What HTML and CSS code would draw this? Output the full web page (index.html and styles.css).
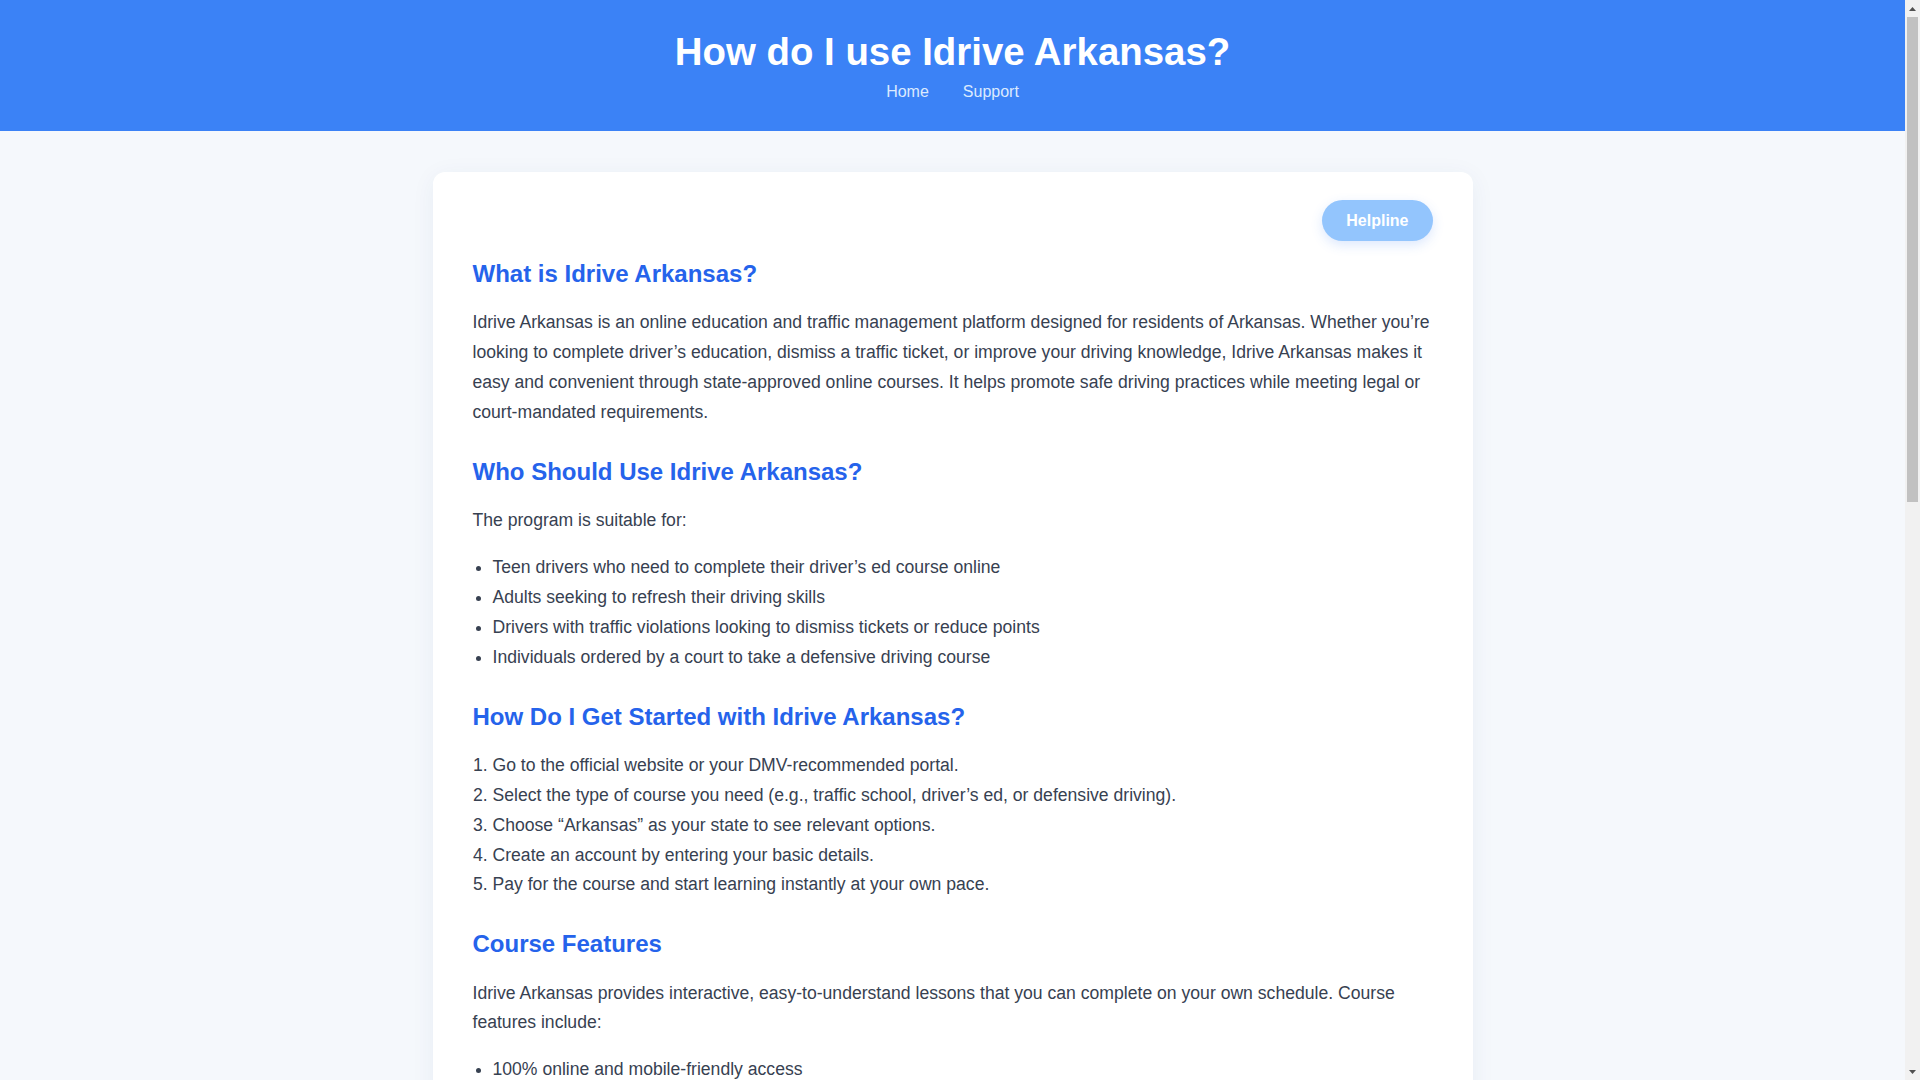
FILE: index.html
```html
<!DOCTYPE html>
<html lang="en">
<head>
<meta charset="utf-8">
<title>How do I use Idrive Arkansas?</title>
<link rel="stylesheet" href="styles.css">
</head>
<body>
<header class="site-header">
  <h1 class="site-title">How do I use Idrive Arkansas?</h1>
  <nav class="site-nav">
    <a href="#" class="nav-link">Home</a>
    <a href="#" class="nav-link">Support</a>
  </nav>
</header>
<main class="page">
  <article class="card">
    <div class="card-top">
      <a href="#" class="helpline">Helpline</a>
    </div>
    <h2>What is Idrive Arkansas?</h2>
    <p>Idrive Arkansas is an online education and traffic management platform designed for residents of Arkansas. Whether you’re looking to complete driver’s education, dismiss a traffic ticket, or improve your driving knowledge, Idrive Arkansas makes it easy and convenient through state-approved online courses. It helps promote safe driving practices while meeting legal or court-mandated requirements.</p>

    <h2>Who Should Use Idrive Arkansas?</h2>
    <p>The program is suitable for:</p>
    <ul>
      <li>Teen drivers who need to complete their driver’s ed course online</li>
      <li>Adults seeking to refresh their driving skills</li>
      <li>Drivers with traffic violations looking to dismiss tickets or reduce points</li>
      <li>Individuals ordered by a court to take a defensive driving course</li>
    </ul>

    <h2>How Do I Get Started with Idrive Arkansas?</h2>
    <ol>
      <li>Go to the official website or your DMV-recommended portal.</li>
      <li>Select the type of course you need (e.g., traffic school, driver’s ed, or defensive driving).</li>
      <li>Choose “Arkansas” as your state to see relevant options.</li>
      <li>Create an account by entering your basic details.</li>
      <li>Pay for the course and start learning instantly at your own pace.</li>
    </ol>

    <h2>Course Features</h2>
    <p>Idrive Arkansas provides interactive, easy-to-understand lessons that you can complete on your own schedule. Course features include:</p>
    <ul>
      <li>100% online and mobile-friendly access</li>
      <li>Self-paced modules you can pause and resume anytime</li>
      <li>Videos, animations, and real-life driving scenarios</li>
      <li>Quizzes to test your knowledge after each chapter</li>
      <li>Instant certificate of completion once you pass the final exam</li>
    </ul>

    <h2>How Long Does the Course Take?</h2>
    <p>The length of the course depends on the program you choose. Defensive driving and ticket dismissal courses usually take between 4 and 8 hours, while driver’s education programs for teens can take up to 30 hours. Since the course is self-paced, you can log in and out as many times as you like without losing your progress.</p>

    <h2>Submitting Your Certificate</h2>
    <p>After completing the course, you will receive a certificate of completion. Depending on your situation, you may need to:</p>
    <ul>
      <li>Submit it to the court handling your traffic ticket</li>
      <li>Provide it to your insurance company for a possible discount</li>
      <li>Present it to the Arkansas DMV when applying for your license</li>
    </ul>

    <h2>Need Help?</h2>
    <p>If you have questions about your account, payments, or course progress, you can contact the Idrive Arkansas support team by phone, email, or live chat. Support agents are available to help you log in, reset your password, and make sure your certificate is delivered on time.</p>

    <h2>Final Thoughts</h2>
    <p>Idrive Arkansas is a simple and flexible way to meet your driving education requirements. With approved online courses, helpful support, and instant certificates, it saves you time while helping you become a safer and more confident driver on Arkansas roads.</p>
  </article>
</main>
<footer class="site-footer">
  <p>© 2025 Idrive Arkansas Guide. All rights reserved.</p>
</footer>
<div class="scrollbar" aria-hidden="true">
  <div class="sb-btn">
    <svg width="7" height="4" viewBox="0 0 7 4"><path d="M0 4 L3.5 0 L7 4 Z" fill="#505050"/></svg>
  </div>
  <div class="sb-track">
    <div class="sb-thumb"></div>
  </div>
  <div class="sb-btn">
    <svg width="7" height="4" viewBox="0 0 7 4"><path d="M0 0 L3.5 4 L7 0 Z" fill="#505050"/></svg>
  </div>
</div>
</body>
</html>
```

FILE: styles.css
```css
* { box-sizing: border-box; }

html, body {
  margin: 0;
  padding: 0;
}

body {
  padding-right: 15px;
  background: #f5f8fc;
  font-family: "Liberation Sans", Arial, Helvetica, sans-serif;
  color: #374151;
}

.site-header {
  background: #3b82f6;
  color: #ffffff;
  text-align: center;
  padding: 29.5px 16px 30px;
}

.site-title {
  margin: 0 0 9px;
  font-size: 38.4px;
  line-height: 1.15;
  font-weight: 700;
}

.site-nav {
  display: flex;
  justify-content: center;
  gap: 34px;
  font-size: 16px;
  line-height: 18.4px;
}

.nav-link {
  color: #dbeafe;
  text-decoration: none;
}

.page {
  padding: 41px 16px 40px;
}

.card {
  max-width: 1040px;
  margin: 0 auto;
  background: #ffffff;
  border-radius: 12px;
  box-shadow: 0 4px 24px rgba(30, 64, 120, 0.06);
  padding: 28px 40px 40px;
}

.card-top {
  display: flex;
  justify-content: flex-end;
  margin-bottom: 17px;
}

.helpline {
  display: inline-block;
  background: #93c5fd;
  color: #ffffff;
  font-weight: 700;
  font-size: 16px;
  line-height: 24px;
  padding: 8.5px 24px;
  border-radius: 999px;
  text-decoration: none;
  box-shadow: 0 4px 12px rgba(59, 130, 246, 0.18);
}

.card h2 {
  color: #2563eb;
  font-size: 24px;
  line-height: 1.3;
  font-weight: 700;
  margin: 28px 0 19px;
}

.card .card-top + h2 {
  margin-top: 0;
}

.card p,
.card ul,
.card ol {
  font-size: 17.6px;
  line-height: 1.7;
  margin: 0 0 17px;
}

.card ul,
.card ol {
  padding-left: 20px;
}

.card li {
  margin: 0;
}

.site-footer {
  text-align: center;
  color: #6b7280;
  font-size: 14px;
  padding: 8px 16px 32px;
}

.site-footer p {
  margin: 0;
}

/* browser scrollbar as seen in the screenshot */
.scrollbar {
  position: fixed;
  top: 0;
  right: 0;
  bottom: 0;
  width: 15px;
  background: #f1f1f1;
  display: flex;
  flex-direction: column;
}

.sb-btn {
  height: 17px;
  display: flex;
  align-items: center;
  justify-content: center;
  flex: none;
}

.sb-track {
  flex: 1;
  padding: 0 2px;
}

.sb-thumb {
  height: 485px;
  background: #c1c1c1;
}
```
